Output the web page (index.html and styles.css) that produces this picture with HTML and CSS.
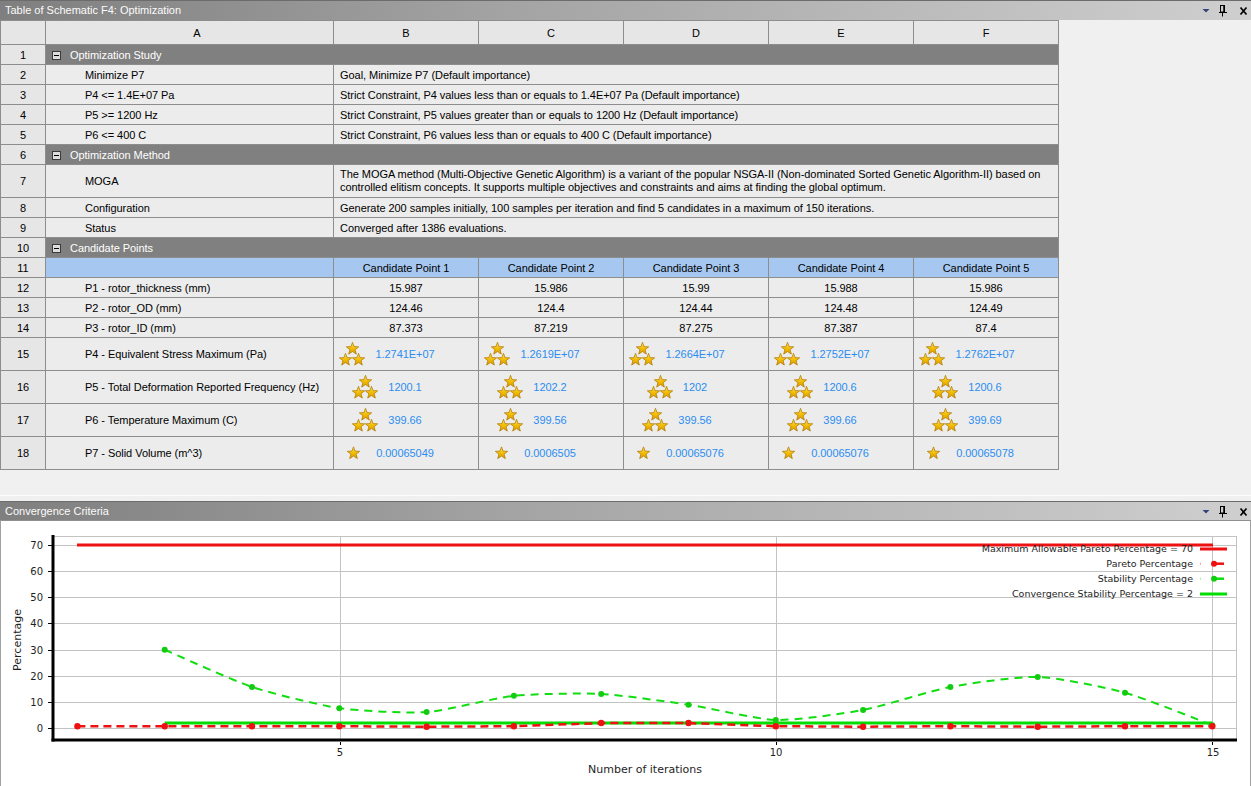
FILE: index.html
```html
<!DOCTYPE html>
<html lang="en">
<head>
<meta charset="utf-8">
<title>Table of Schematic F4: Optimization</title>
<link rel="stylesheet" href="styles.css">
</head>
<body>
<svg class="defs" width="0" height="0" aria-hidden="true">
  <defs>
    <linearGradient id="gold" x1="0" y1="0" x2="0" y2="1">
      <stop offset="0" stop-color="#ffe35a"/>
      <stop offset="0.55" stop-color="#f2bb00"/>
      <stop offset="1" stop-color="#d99a00"/>
    </linearGradient>
    <symbol id="star" viewBox="0 0 12 12">
      <path d="M6 0.3 L7.47 4.28 L11.71 4.45 L8.38 7.07 L9.53 11.15 L6 8.8 L2.47 11.15 L3.62 7.07 L0.29 4.45 L4.53 4.28 Z" fill="url(#gold)" stroke="#b07a00" stroke-width="0.7" stroke-linejoin="round"/>
    </symbol>
    <symbol id="stars3" viewBox="0 0 27 24">
      <use href="#star" x="7" y="0" width="13" height="13"/>
      <use href="#star" x="0" y="11" width="13" height="13"/>
      <use href="#star" x="13" y="11" width="13" height="13"/>
    </symbol>
    <symbol id="star1" viewBox="0 0 27 24">
      <use href="#star" x="7" y="5.5" width="13" height="13"/>
    </symbol>
    <symbol id="winbtns" viewBox="0 0 50 19">
      <path d="M1.5 8 H8.5 L5 11.5 Z" fill="#34437a"/>
      <rect x="19.5" y="4.5" width="4" height="6.5" fill="none" stroke="#000" stroke-width="1"/>
      <line x1="23" y1="4.5" x2="23" y2="11" stroke="#000" stroke-width="1.5"/>
      <line x1="18" y1="11.5" x2="26" y2="11.5" stroke="#000" stroke-width="1"/>
      <line x1="21.5" y1="11.5" x2="21.5" y2="15.5" stroke="#000" stroke-width="1"/>
      <path d="M39.5 6.5 L45.5 13.5 M45.5 6.5 L39.5 13.5" stroke="#000" stroke-width="1.7"/>
    </symbol>
  </defs>
</svg>

<section class="panel panel-top">
  <header class="titlebar">
    <span class="title">Table of Schematic F4: Optimization</span>
    <svg class="winbtns" width="50" height="19"><use href="#winbtns"/></svg>
  </header>
  <div class="top-body">
    <table class="grid">
      <colgroup>
        <col class="c-rn"><col class="c-a"><col class="c-cp"><col class="c-cp"><col class="c-cp"><col class="c-cp"><col class="c-cp">
      </colgroup>
      <tr class="hdr">
        <th class="rn"></th><th class="hdr-a">A</th><th>B</th><th>C</th><th>D</th><th>E</th><th>F</th>
      </tr>
      <tr class="row sec">
        <td class="rn">1</td><td colspan="6" class="sec-cell"><span class="tog"></span>Optimization Study</td>
      </tr>
      <tr class="row">
        <td class="rn">2</td><td class="lbl">Minimize P7</td><td colspan="5" class="desc">Goal, Minimize P7 (Default importance)</td>
      </tr>
      <tr class="row">
        <td class="rn">3</td><td class="lbl">P4 &lt;= 1.4E+07 Pa</td><td colspan="5" class="desc">Strict Constraint, P4 values less than or equals to 1.4E+07 Pa (Default importance)</td>
      </tr>
      <tr class="row">
        <td class="rn">4</td><td class="lbl">P5 &gt;= 1200 Hz</td><td colspan="5" class="desc">Strict Constraint, P5 values greater than or equals to 1200 Hz (Default importance)</td>
      </tr>
      <tr class="row">
        <td class="rn">5</td><td class="lbl">P6 &lt;= 400 C</td><td colspan="5" class="desc">Strict Constraint, P6 values less than or equals to 400 C (Default importance)</td>
      </tr>
      <tr class="row sec">
        <td class="rn">6</td><td colspan="6" class="sec-cell"><span class="tog"></span>Optimization Method</td>
      </tr>
      <tr class="row tall">
        <td class="rn">7</td><td class="lbl">MOGA</td><td colspan="5" class="desc">The MOGA method (Multi-Objective Genetic Algorithm) is a variant of the popular NSGA-II (Non-dominated Sorted Genetic Algorithm-II) based on controlled elitism concepts. It supports multiple objectives and constraints and aims at finding the global optimum.</td>
      </tr>
      <tr class="row">
        <td class="rn">8</td><td class="lbl">Configuration</td><td colspan="5" class="desc">Generate 200 samples initially, 100 samples per iteration and find 5 candidates in a maximum of 150 iterations.</td>
      </tr>
      <tr class="row">
        <td class="rn">9</td><td class="lbl">Status</td><td colspan="5" class="desc">Converged after 1386 evaluations.</td>
      </tr>
      <tr class="row sec">
        <td class="rn">10</td><td colspan="6" class="sec-cell"><span class="tog"></span>Candidate Points</td>
      </tr>
      <tr class="row cp-head">
        <td class="rn">11</td><td class="blue"></td>
        <td class="blue">Candidate Point 1</td><td class="blue">Candidate Point 2</td><td class="blue">Candidate Point 3</td><td class="blue">Candidate Point 4</td><td class="blue">Candidate Point 5</td>
      </tr>
      <tr class="row">
        <td class="rn">12</td><td class="lbl">P1 - rotor_thickness (mm)</td>
        <td class="num">15.987</td><td class="num">15.986</td><td class="num">15.99</td><td class="num">15.988</td><td class="num">15.986</td>
      </tr>
      <tr class="row">
        <td class="rn">13</td><td class="lbl">P2 - rotor_OD (mm)</td>
        <td class="num">124.46</td><td class="num">124.4</td><td class="num">124.44</td><td class="num">124.48</td><td class="num">124.49</td>
      </tr>
      <tr class="row">
        <td class="rn">14</td><td class="lbl">P3 - rotor_ID (mm)</td>
        <td class="num">87.373</td><td class="num">87.219</td><td class="num">87.275</td><td class="num">87.387</td><td class="num">87.4</td>
      </tr>
      <tr class="row tall">
        <td class="rn">15</td><td class="lbl">P4 - Equivalent Stress Maximum (Pa)</td>
        <td><div class="rated"><svg class="rate-icon"><use href="#stars3"/></svg><span class="val">1.2741E+07</span></div></td>
        <td><div class="rated"><svg class="rate-icon"><use href="#stars3"/></svg><span class="val">1.2619E+07</span></div></td>
        <td><div class="rated"><svg class="rate-icon"><use href="#stars3"/></svg><span class="val">1.2664E+07</span></div></td>
        <td><div class="rated"><svg class="rate-icon"><use href="#stars3"/></svg><span class="val">1.2752E+07</span></div></td>
        <td><div class="rated"><svg class="rate-icon"><use href="#stars3"/></svg><span class="val">1.2762E+07</span></div></td>
      </tr>
      <tr class="row tall">
        <td class="rn">16</td><td class="lbl">P5 - Total Deformation Reported Frequency (Hz)</td>
        <td><div class="rated"><svg class="rate-icon"><use href="#stars3"/></svg><span class="val">1200.1</span></div></td>
        <td><div class="rated"><svg class="rate-icon"><use href="#stars3"/></svg><span class="val">1202.2</span></div></td>
        <td><div class="rated"><svg class="rate-icon"><use href="#stars3"/></svg><span class="val">1202</span></div></td>
        <td><div class="rated"><svg class="rate-icon"><use href="#stars3"/></svg><span class="val">1200.6</span></div></td>
        <td><div class="rated"><svg class="rate-icon"><use href="#stars3"/></svg><span class="val">1200.6</span></div></td>
      </tr>
      <tr class="row tall">
        <td class="rn">17</td><td class="lbl">P6 - Temperature Maximum (C)</td>
        <td><div class="rated"><svg class="rate-icon"><use href="#stars3"/></svg><span class="val">399.66</span></div></td>
        <td><div class="rated"><svg class="rate-icon"><use href="#stars3"/></svg><span class="val">399.56</span></div></td>
        <td><div class="rated"><svg class="rate-icon"><use href="#stars3"/></svg><span class="val">399.56</span></div></td>
        <td><div class="rated"><svg class="rate-icon"><use href="#stars3"/></svg><span class="val">399.66</span></div></td>
        <td><div class="rated"><svg class="rate-icon"><use href="#stars3"/></svg><span class="val">399.69</span></div></td>
      </tr>
      <tr class="row tall">
        <td class="rn">18</td><td class="lbl">P7 - Solid Volume (m^3)</td>
        <td><div class="rated"><svg class="rate-icon"><use href="#star1"/></svg><span class="val">0.00065049</span></div></td>
        <td><div class="rated"><svg class="rate-icon"><use href="#star1"/></svg><span class="val">0.0006505</span></div></td>
        <td><div class="rated"><svg class="rate-icon"><use href="#star1"/></svg><span class="val">0.00065076</span></div></td>
        <td><div class="rated"><svg class="rate-icon"><use href="#star1"/></svg><span class="val">0.00065076</span></div></td>
        <td><div class="rated"><svg class="rate-icon"><use href="#star1"/></svg><span class="val">0.00065078</span></div></td>
      </tr>
    </table>
  </div>
</section>

<div class="splitter"></div>

<section class="panel panel-bottom">
  <header class="titlebar titlebar-bottom">
    <span class="title">Convergence Criteria</span>
    <svg class="winbtns" width="50" height="19"><use href="#winbtns"/></svg>
  </header>
  <div class="chart-body">
    <svg class="chart" width="1249" height="265" viewBox="1 521 1249 265">
      <g class="gridlines" stroke="#c3c3c3" stroke-width="1">
        <line x1="54" y1="536.5" x2="1237" y2="536.5"/>
        <line x1="54" y1="545.5" x2="1237" y2="545.5"/>
        <line x1="54" y1="571.5" x2="1237" y2="571.5"/>
        <line x1="54" y1="597.5" x2="1237" y2="597.5"/>
        <line x1="54" y1="623.5" x2="1237" y2="623.5"/>
        <line x1="54" y1="650.5" x2="1237" y2="650.5"/>
        <line x1="54" y1="676.5" x2="1237" y2="676.5"/>
        <line x1="54" y1="702.5" x2="1237" y2="702.5"/>
        <line x1="54" y1="728.5" x2="1237" y2="728.5"/>
        <line x1="340.5" y1="536" x2="340.5" y2="740"/>
        <line x1="776.5" y1="536" x2="776.5" y2="740"/>
        <line x1="1212.5" y1="536" x2="1212.5" y2="740"/>
        <line x1="1236.5" y1="536" x2="1236.5" y2="740"/>
      </g>
      <g class="ticks" stroke="#000" stroke-width="1">
        <line x1="48" y1="545.5" x2="52" y2="545.5"/>
        <line x1="48" y1="571.5" x2="52" y2="571.5"/>
        <line x1="48" y1="597.5" x2="52" y2="597.5"/>
        <line x1="48" y1="623.5" x2="52" y2="623.5"/>
        <line x1="48" y1="650.5" x2="52" y2="650.5"/>
        <line x1="48" y1="676.5" x2="52" y2="676.5"/>
        <line x1="48" y1="702.5" x2="52" y2="702.5"/>
        <line x1="48" y1="728.5" x2="52" y2="728.5"/>
        <line x1="340.5" y1="742" x2="340.5" y2="745"/>
        <line x1="776.5" y1="742" x2="776.5" y2="745"/>
        <line x1="1212.5" y1="742" x2="1212.5" y2="745"/>
      </g>
      <g class="tick-labels y-labels">
        <text x="43" y="545.5">70</text>
        <text x="43" y="571.5">60</text>
        <text x="43" y="597.5">50</text>
        <text x="43" y="623.5">40</text>
        <text x="43" y="650.5">30</text>
        <text x="43" y="676.5">20</text>
        <text x="43" y="702.5">10</text>
        <text x="43" y="728.5">0</text>
      </g>
      <g class="tick-labels x-labels">
        <text x="340" y="752">5</text>
        <text x="776" y="752">10</text>
        <text x="1213" y="752">15</text>
      </g>
      <text class="axis-title" x="645" y="769">Number of iterations</text>
      <text class="axis-title" transform="translate(17 640) rotate(-90)">Percentage</text>

      <line x1="77" y1="545" x2="1213" y2="545" stroke="#ee1111" stroke-width="3"/>
      <line x1="164.7" y1="723.1" x2="1212.3" y2="723.1" stroke="#00dd00" stroke-width="3"/>
      <polyline id="pareto-line" fill="none" stroke="#ee1111" stroke-width="2.5" stroke-dasharray="8 5" points=""/>
      <path id="stab-line" fill="none" stroke="#11dd11" stroke-width="2" stroke-dasharray="8 6" d=""/>
      <g id="stab-dots" fill="#11cc11"></g>
      <g id="pareto-dots" fill="#ee1111"></g>

      <g class="axes" stroke="#000" stroke-width="3">
        <line x1="53" y1="535" x2="53" y2="741.5"/>
        <line x1="51.5" y1="740" x2="1237" y2="740"/>
      </g>

      <g class="legend">
        <text x="1193" y="548.5">Maximum Allowable Pareto Percentage = 70</text>
        <text x="1193" y="563.5">Pareto Percentage</text>
        <text x="1193" y="578.5">Stability Percentage</text>
        <text x="1193" y="593.5">Convergence Stability Percentage = 2</text>
        <line x1="1200" y1="549" x2="1227" y2="549" stroke="#ee1111" stroke-width="3"/>
        <line x1="1200" y1="563.7" x2="1201" y2="563.7" stroke="#f4a0a0" stroke-width="2"/>
        <line x1="1212" y1="563.7" x2="1224" y2="563.7" stroke="#ee1111" stroke-width="2.5"/>
        <circle cx="1214" cy="563.7" r="3" fill="#ee1111"/>
        <line x1="1200" y1="578.7" x2="1201" y2="578.7" stroke="#a0f0a0" stroke-width="2"/>
        <line x1="1212" y1="578.7" x2="1224" y2="578.7" stroke="#11dd11" stroke-width="2.5"/>
        <circle cx="1214" cy="578.7" r="3" fill="#11cc11"/>
        <line x1="1200" y1="594" x2="1227" y2="594" stroke="#00dd00" stroke-width="3"/>
      </g>
    </svg>
  </div>
</section>
<script src="script.js"></script>
</body>
</html>
```

FILE: styles.css
```css
* { box-sizing: border-box; }
html, body { margin: 0; padding: 0; }
body {
  width: 1251px;
  height: 786px;
  overflow: hidden;
  background: #f0f0f0;
  font-family: "Liberation Sans", Arial, sans-serif;
  font-size: 11px;
  color: #000;
}
.defs { display: block; width: 0; height: 0; overflow: hidden; }

/* window title bars */
.titlebar {
  height: 20px;
  border-top: 1px solid #6c6c6c;
  background: linear-gradient(to right, #7f7f7f 0%, #a3a3a3 40%, #cfcfcf 100%);
  display: flex;
  align-items: center;
  padding-left: 5px;
  color: #fbfbfb;
  font-size: 11px;
}
.titlebar .title { flex: 1; line-height: 19px; }
.winbtns { display: block; flex: none; }
.titlebar-bottom { height: 19px; }

/* top panel */
.top-body {
  height: 476px;
  border-bottom: 1px solid #fdfdfd;
  background: #f0f0f0;
}
.splitter { height: 5px; background: #f0f0f0; }

.grid {
  border-collapse: collapse;
  table-layout: fixed;
  width: 1058px;
  background: #ececec;
  letter-spacing: -0.05px;
}
.c-rn { width: 45px; }
.c-a { width: 288px; }
.c-cp { width: 145px; }
.grid th, .grid td {
  border: 1px solid #8d8d8d;
  padding: 0;
  vertical-align: middle;
  white-space: nowrap;
  overflow: hidden;
}
.grid th {
  height: 24px;
  background: #e6e6e6;
  font-weight: normal;
  text-align: center;
}
.grid .hdr-a { padding-left: 15px; }
.grid .row td { height: 20px; }
.grid .row.tall td { height: 33px; }
.grid td.rn { background: #e6e6e6; text-align: center; }
.grid td.lbl { padding-left: 39px; }
.grid td.desc { padding-left: 6px; }
.grid .tall td.desc { white-space: normal; line-height: 13px; padding-right: 10px; }
.grid td.num { text-align: center; }

.grid .sec td.sec-cell {
  background: #808080;
  color: #fff;
  padding-left: 6px;
}
.tog {
  display: inline-block;
  width: 9px;
  height: 9px;
  margin-right: 9px;
  vertical-align: -1px;
  border: 1px solid #3a3a3a;
  background: linear-gradient(#000, #000) center / 5px 1px no-repeat, #dedede;
}
.grid .cp-head td.blue { background: #a6c8f0; text-align: center; }

.rated {
  display: flex;
  align-items: center;
  justify-content: center;
  gap: 9px;
  padding-right: 38px;
}
.rate-icon { width: 27px; height: 24px; flex: none; display: block; }
.val { color: #2b8cf2; }

/* bottom panel */
.chart-body {
  height: 266px;
  background: #fff;
  border-top: 1px solid #8f8f8f;
  border-left: 1px solid #a0a0a0;
  border-right: 1px solid #a0a0a0;
}
.chart { display: block; font-family: "DejaVu Sans", sans-serif; }
.tick-labels text { font-size: 10px; fill: #1e1e1e; dominant-baseline: central; }
.y-labels text { text-anchor: end; }
.x-labels text { text-anchor: middle; }
.axis-title { font-size: 11px; fill: #1e1e1e; text-anchor: middle; dominant-baseline: central; }
.legend text { font-size: 9.5px; fill: #1e1e1e; text-anchor: end; dominant-baseline: central; }
```

FILE: script.js
```js
(function () {
  var X = function (i) { return 339.3 + 87.3 * (i - 5); };
  var Y = function (v) { return 728.3 - 2.619 * v; };
  var pareto = [[2,0.8],[3,0.8],[4,0.8],[5,0.8],[6,0.6],[7,0.8],[8,2],[9,2],[10,0.8],[11,0.6],[12,0.8],[13,0.6],[14,0.8],[15,0.8]];
  var stab = [[3,30],[4,15.8],[5,7.7],[6,6.2],[7,12.4],[8,13.1],[9,9],[10,3.2],[11,7],[12,15.8],[13,19.6],[14,13.6],[15,1.2]];
  var NS = 'http://www.w3.org/2000/svg';
  function pts(a) { return a.map(function (p) { return [X(p[0]), Y(p[1])]; }); }
  var pp = pts(pareto), sp = pts(stab);
  document.getElementById('pareto-line').setAttribute('points',
    pp.map(function (p) { return p[0].toFixed(1) + ',' + p[1].toFixed(1); }).join(' '));
  var f = function (n) { return n.toFixed(2); };
  var T = 9;
  var d = 'M' + f(sp[0][0]) + ',' + f(sp[0][1]);
  for (var k = 0; k < sp.length - 1; k++) {
    var p0 = sp[Math.max(k - 1, 0)], p1 = sp[k], p2 = sp[k + 1], p3 = sp[Math.min(k + 2, sp.length - 1)];
    var c1x = p1[0] + (p2[0] - p0[0]) / T, c1y = p1[1] + (p2[1] - p0[1]) / T;
    var c2x = p2[0] - (p3[0] - p1[0]) / T, c2y = p2[1] - (p3[1] - p1[1]) / T;
    d += ' C' + f(c1x) + ',' + f(c1y) + ' ' + f(c2x) + ',' + f(c2y) + ' ' + f(p2[0]) + ',' + f(p2[1]);
  }
  document.getElementById('stab-line').setAttribute('d', d);
  function dots(id, arr, r) {
    var g = document.getElementById(id);
    arr.forEach(function (p) {
      var c = document.createElementNS(NS, 'circle');
      c.setAttribute('cx', p[0]); c.setAttribute('cy', p[1]); c.setAttribute('r', r);
      g.appendChild(c);
    });
  }
  dots('stab-dots', sp, 3);
  dots('pareto-dots', pp, 3.2);
})();
```
